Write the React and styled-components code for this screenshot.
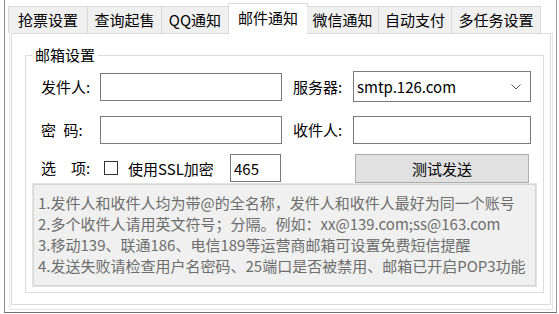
import React from "react";
import styled, { createGlobalStyle } from "styled-components";

const GlobalStyle = createGlobalStyle`
  html, body {
    margin: 0;
    padding: 0;
    background: #ffffff;
    overflow: hidden;
  }
  body {
    font-family: "Noto Sans CJK SC", "Noto Sans", sans-serif;
    font-size: 15px;
    color: #000000;
  }
`;

const TABS = [
  { label: "抢票设置", width: 80 },
  { label: "查询起售", width: 75 },
  { label: "QQ通知", width: 68 },
  { label: "邮件通知", width: 80, active: true },
  { label: "微信通知", width: 72 },
  { label: "自动支付", width: 74 },
  { label: "多任务设置", width: 90 },
];

const TIPS = [
  "1.发件人和收件人均为带@的全名称，发件人和收件人最好为同一个账号",
  "2.多个收件人请用英文符号；分隔。例如：xx@139.com;ss@163.com",
  "3.移动139、联通186、电信189等运营商邮箱可设置免费短信提醒",
  "4.发送失败请检查用户名密码、25端口是否被禁用、邮箱已开启POP3功能",
];

const App = () => {
  return (
    <>
      <GlobalStyle />
      <Frame>
        <TabControl>
          <TabRow>
            {TABS.map((t, i) => (
              <Tab
                key={t.label}
                $width={t.width}
                $active={t.active}
                $afterActive={i > 0 && TABS[i - 1].active}
              >
                {t.label}
              </Tab>
            ))}
          </TabRow>
          <PanelWrap>
            <Panel>
              <GroupBox>
                <Legend>邮箱设置</Legend>
                <Form>
                  <Row $height={31}>
                    <Label>发件人:</Label>
                    <TextBox $width={182} />
                    <SideLabel>服务器:</SideLabel>
                    <Select>
                      <span>smtp.126.com</span>
                      <svg width="10" height="6" viewBox="0 0 10 6">
                        <polyline
                          points="0.5,0.5 5,5 9.5,0.5"
                          fill="none"
                          stroke="#555"
                          strokeWidth="1"
                        />
                      </svg>
                    </Select>
                  </Row>
                  <Row $height={28} $gap={14}>
                    <Label>{"密\u2002码:"}</Label>
                    <TextBox $width={182} />
                    <SideLabel>收件人:</SideLabel>
                    <TextBox $width={178} />
                  </Row>
                  <Row $height={30} $gap={9}>
                    <Label>{"选\u2003项:"}</Label>
                    <CheckGroup>
                      <CheckBox />
                      <span>使用SSL加密</span>
                    </CheckGroup>
                    <TextBox $width={51}>465</TextBox>
                    <TestButton>测试发送</TestButton>
                  </Row>
                </Form>
                <InfoBox>
                  {TIPS.map((line) => (
                    <InfoLine key={line}>{line}</InfoLine>
                  ))}
                </InfoBox>
              </GroupBox>
            </Panel>
          </PanelWrap>
        </TabControl>
      </Frame>
    </>
  );
};
export default App;

const Frame = styled.div`
  box-sizing: border-box;
  margin-left: 4px;
  width: 553px;
  height: 313px;
  border-left: 1px solid #8c8c8c;
  border-right: 1px solid #9a9a9a;
  border-bottom: 1px solid #707070;
  padding: 3px 3px 0 3px;
`;

const TabControl = styled.div`
  display: flex;
  flex-direction: column;
  width: 545px;
  height: 307px;
`;

const TabRow = styled.div`
  position: relative;
  z-index: 1;
  display: flex;
  align-items: flex-start;
  height: 30px;
`;

const Tab = styled.div`
  box-sizing: border-box;
  display: flex;
  align-items: center;
  justify-content: center;
  width: ${(p) => p.$width}px;
  height: ${(p) => (p.$active ? 31 : 27)}px;
  margin-top: ${(p) => (p.$active ? 0 : 3)}px;
  padding-bottom: ${(p) => (p.$active ? 2 : 0)}px;
  background: ${(p) => (p.$active ? "#ffffff" : "#f0f0f0")};
  border-top: 1px solid #d9d9d9;
  border-left: ${(p) => (p.$afterActive ? "none" : "1px solid #d9d9d9")};
  border-right: 1px solid #d9d9d9;
  margin-right: -1px;
  font-size: 15px;
  line-height: 16px;
  white-space: nowrap;
  color: #000000;
`;

const PanelWrap = styled.div`
  box-sizing: border-box;
  display: flex;
  margin-left: 1px;
  width: 544px;
  height: 277px;
  border-left: 1px solid #e6e6e6;
  border-right: 1px solid #e6e6e6;
  border-bottom: 1px solid #e6e6e6;
  padding: 0 1px 4px 1px;
`;

const Panel = styled.div`
  box-sizing: border-box;
  flex: 1;
  background: #ffffff;
  border: 1px solid #d9d9d9;
  padding: 13px 6px 0 13px;
`;

const GroupBox = styled.fieldset`
  margin: 0;
  min-width: 0;
  padding: 0 6px 5px 0;
  border: 1px solid #dcdcdc;
`;

const Legend = styled.legend`
  margin-left: 6px;
  padding: 0 3px;
  font-size: 15px;
  line-height: 16px;
  color: #000000;
`;

const Form = styled.div`
  display: flex;
  flex-direction: column;
  padding: 8px 0 0 15px;
`;

const Row = styled.div`
  display: flex;
  align-items: center;
  height: ${(p) => p.$height}px;
  margin-top: ${(p) => p.$gap || 0}px;
`;

const Label = styled.div`
  width: 59px;
  font-size: 15px;
  line-height: 18px;
  white-space: pre;
`;

const SideLabel = styled.div`
  width: 60px;
  margin-left: 11px;
  font-size: 15px;
  line-height: 18px;
  white-space: nowrap;
`;

const TextBox = styled.div`
  box-sizing: border-box;
  display: flex;
  align-items: center;
  width: ${(p) => p.$width}px;
  height: 28px;
  padding-left: 3px;
  border: 1px solid #7a7a7a;
  background: #ffffff;
  font-size: 15px;
`;

const Select = styled.div`
  box-sizing: border-box;
  display: flex;
  align-items: center;
  justify-content: space-between;
  width: 178px;
  height: 31px;
  padding: 0 9px 0 3px;
  border: 1px solid #7a7a7a;
  background: #ffffff;
  font-size: 15px;
`;

const CheckGroup = styled.div`
  display: flex;
  align-items: center;
  gap: 10px;
  width: 130px;
  padding-left: 4px;
  box-sizing: border-box;
  font-size: 15px;
  white-space: nowrap;
`;

const CheckBox = styled.div`
  box-sizing: border-box;
  width: 14px;
  height: 14px;
  border: 1px solid #333333;
  background: #ffffff;
`;

const TestButton = styled.button`
  box-sizing: border-box;
  width: 174px;
  height: 29px;
  margin-left: 74px;
  padding: 0;
  border: 1px solid #adadad;
  background: #e1e1e1;
  font-family: "Noto Sans CJK SC", "Noto Sans", sans-serif;
  font-size: 15px;
  color: #000000;
`;

const InfoBox = styled.div`
  box-sizing: border-box;
  height: 104px;
  margin-left: 6px;
  padding: 8px 0 0 5px;
  background: #f0f0f0;
  border: 1px solid #e3e3e3;
  box-shadow: inset 0 0 0 1px #d5d5d5;
`;

const InfoLine = styled.div`
  font-size: 15px;
  line-height: 21px;
  color: #6d6d6d;
  white-space: nowrap;
`;
